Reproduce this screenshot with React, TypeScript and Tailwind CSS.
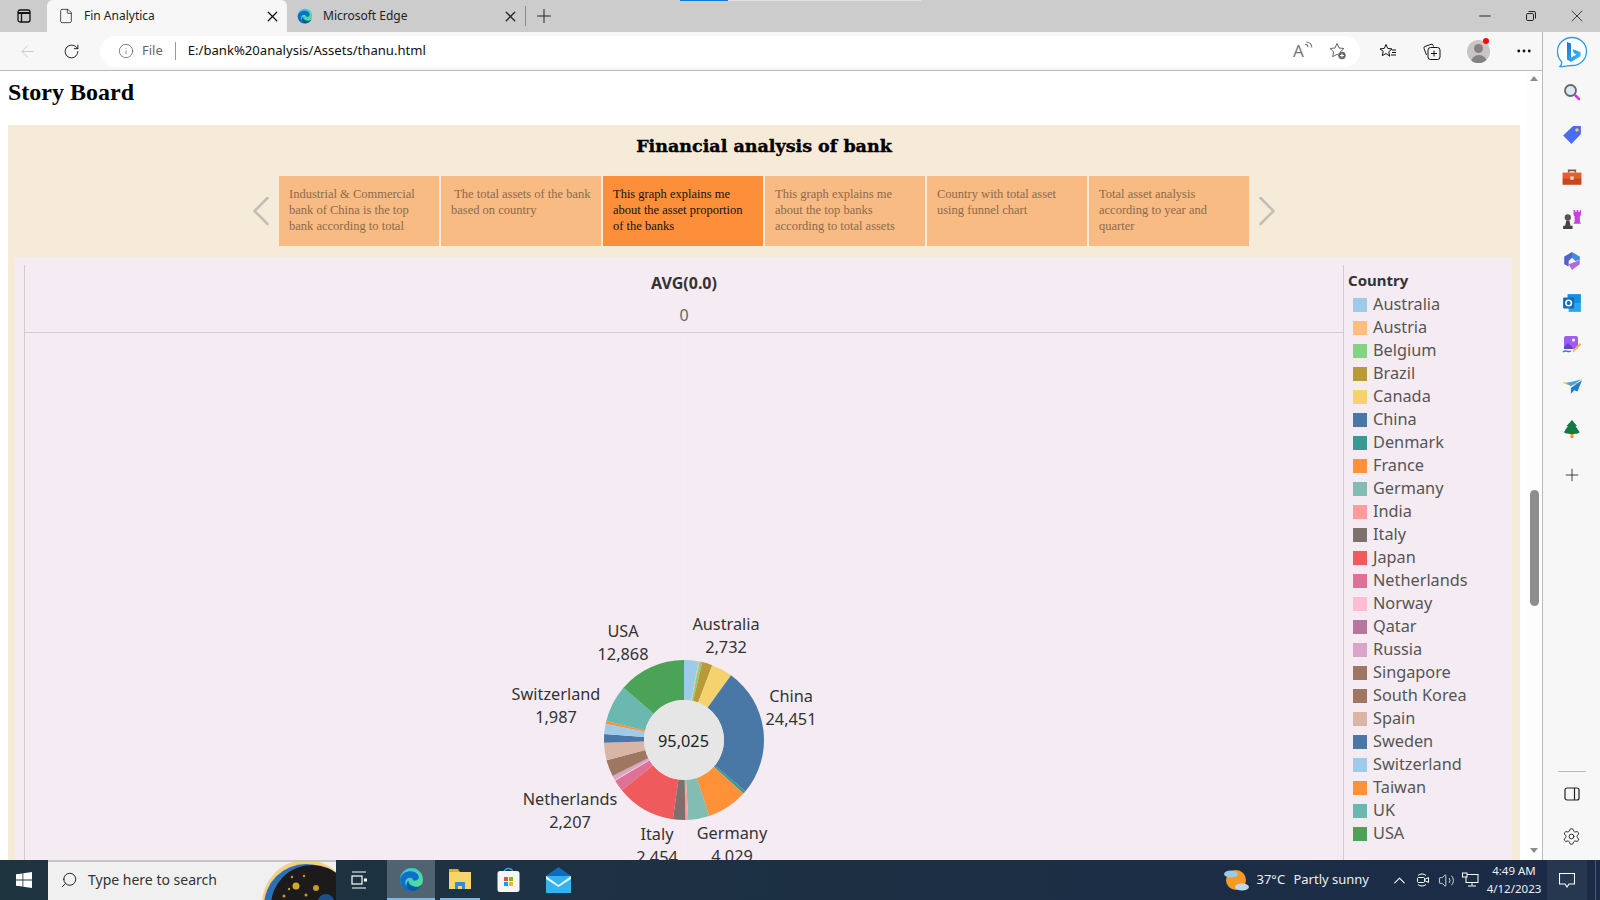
import React from 'react';
import { ArrowLeft, ChevronLeft, ChevronRight, ChevronUp, File, Info, MoreHorizontal, Plus, RotateCw, Search, Settings, X, Minus, Volume2 } from 'lucide-react';

const cards = [
  { text: 'Industrial & Commercial bank of China is the top bank according to total' },
  { text: '\u00a0The total assets of the bank based on country' },
  { text: 'This graph explains me about the asset proportion of the banks', active: true },
  { text: 'This graph explains me about the top banks according to total assets' },
  { text: 'Country with total asset using funnel chart' },
  { text: 'Total asset analysis according to year and quarter' },
];

const countries = [
  { name: 'Australia', color: '#9dcbe9', from: 0, to: 10.4 },
  { name: 'Austria', color: '#ffbe7d', from: 10.4, to: 11.2 },
  { name: 'Belgium', color: '#86d285', from: 11.2, to: 13.2 },
  { name: 'Brazil', color: '#b89a39', from: 13.2, to: 20.7 },
  { name: 'Canada', color: '#f5d26e', from: 20.7, to: 36 },
  { name: 'China', color: '#4a78a6', from: 36, to: 129.8 },
  { name: 'Denmark', color: '#399993', from: 129.8, to: 132 },
  { name: 'France', color: '#ff9139', from: 132, to: 161.6 },
  { name: 'Germany', color: '#82bdb4', from: 161.6, to: 177 },
  { name: 'India', color: '#ff9d9d', from: 177, to: 179 },
  { name: 'Italy', color: '#7d716e', from: 179, to: 188 },
  { name: 'Japan', color: '#ef5a5c', from: 188, to: 231 },
  { name: 'Netherlands', color: '#de7196', from: 231, to: 239.4 },
  { name: 'Norway', color: '#ffbdd3', from: 239.4, to: 240.4 },
  { name: 'Qatar', color: '#b6769f', from: 240.4, to: 240.8 },
  { name: 'Russia', color: '#d9a5c8', from: 240.8, to: 243 },
  { name: 'Singapore', color: '#9f7661', from: 243, to: 243.4 },
  { name: 'South Korea', color: '#9f7661', from: 243.4, to: 255.4 },
  { name: 'Spain', color: '#d9b5a6', from: 255.4, to: 268 },
  { name: 'Sweden', color: '#4a78a6', from: 268, to: 274.3 },
  { name: 'Switzerland', color: '#9dcbe9', from: 274.3, to: 281.8 },
  { name: 'Taiwan', color: '#ff9139', from: 281.8, to: 283.8 },
  { name: 'UK', color: '#6bb8b0', from: 283.8, to: 310.8 },
  { name: 'USA', color: '#4aa356', from: 310.8, to: 360 },
];

// label centres, measured from the top left of the chart pane
const labels = [
  { name: 'USA', value: '12,868', x: 598, y: 298 },
  { name: 'Australia', value: '2,732', x: 701, y: 291 },
  { name: 'China', value: '24,451', x: 766, y: 363 },
  { name: 'Switzerland', value: '1,987', x: 531, y: 361 },
  { name: 'Netherlands', value: '2,207', x: 545, y: 466 },
  { name: 'Italy', value: '2,454', x: 632, y: 501 },
  { name: 'Germany', value: '4,029', x: 707, y: 500 },
];

function slicePath(from: number, to: number) {
  const point = (deg: number, r: number) => {
    const a = (deg * Math.PI) / 180;
    return `${(80 + r * Math.sin(a)).toFixed(2)} ${(80 - r * Math.cos(a)).toFixed(2)}`;
  };
  const large = to - from > 180 ? 1 : 0;
  return `M${point(from, 40)} L${point(from, 80)} A80 80 0 ${large} 1 ${point(to, 80)} L${point(to, 40)} A40 40 0 ${large} 0 ${point(from, 40)}Z`;
}

function EdgeLogo({ size }: { size: number }) {
  return (
    <svg width={size} height={size} viewBox="0 0 24 24">
      <defs>
        <linearGradient id="edgeTop" x1="0" y1="0" x2="1" y2="1">
          <stop offset="0" stopColor="#35c1f1" />
          <stop offset="1" stopColor="#5be37d" />
        </linearGradient>
      </defs>
      <circle cx="12" cy="12" r="11" fill="url(#edgeTop)" />
      <path d="M1 12C2 6 7 4 11 4c5 0 8 3 8 6 0 2-2 3-4 3-2 0-2-1-2-2-3-2-7 0-7 4 0 4 5 8 11 6-2 2-5 3-8 2-5-1-8-6-8-11z" fill="#0f6fc6" />
      <path d="M9 13c0 4 4 6 8 6 2 0 4-1 5-3-1 4-5 7-9 7-3 0-5-2-6-5 0-2 1-4 2-5z" fill="#0c59a4" />
    </svg>
  );
}

function BingButton() {
  return (
    <svg width="32" height="32" viewBox="0 0 32 32">
      <defs>
        <linearGradient id="bingFill" x1="0" y1="0" x2="1" y2="1">
          <stop offset="0" stopColor="#1b6fe0" />
          <stop offset="1" stopColor="#37c6f0" />
        </linearGradient>
      </defs>
      <path d="M16 1.500c8 0 14.500 6.200 14.500 14S24 29.500 16 29.500c-3 0-8 1.500-12 1 1.500-1.500 2-3.500 1.500-5C3 23 1.500 19.500 1.500 15.500 1.500 7.700 8 1.500 16 1.500z" fill="#fff" stroke="#2f9be8" strokeWidth="1.300" />
      <path d="M11 6l4 1.500v14l5.500-3-2.500-1.200-1.500-4 8 2.700v4.300L15 26l-4-2.500z" fill="url(#bingFill)" />
    </svg>
  );
}

function SidebarIcon({ children }: { children: React.ReactNode }) {
  return <div className="flex h-[42px] w-full items-center justify-center">{children}</div>;
}

function Sidebar() {
  return (
    <aside className="flex w-[57px] shrink-0 flex-col items-center bg-[#f7f7f7]">
      <div className="flex h-[39px] w-full items-center justify-center pl-px">
        <BingButton />
      </div>
      <SidebarIcon>
        <svg width="18" height="18" viewBox="0 0 18 18" fill="none">
          <circle cx="7.500" cy="7.500" r="5.500" fill="#dbe9f2" stroke="#666" strokeWidth="1.800" />
          <path d="M11.800 11.800L16 16" stroke="#c93fd8" strokeWidth="2.600" strokeLinecap="round" />
        </svg>
      </SidebarIcon>
      <div className="mt-px flex w-full flex-col">
        <SidebarIcon>
          <svg width="20" height="20" viewBox="0 0 18 18">
            <path d="M10 1h7v7l-8.500 9L1 9.500z" fill="#4a6cf0" />
            <circle cx="13.500" cy="4.500" r="1.600" fill="#f7c948" />
          </svg>
        </SidebarIcon>
        <SidebarIcon>
          <svg width="20" height="20" viewBox="0 0 18 18" fill="none">
            <path d="M6 5V3h6v2" stroke="#7a5b50" strokeWidth="1.500" />
            <rect x="0.500" y="5" width="17" height="5" fill="#e85d2c" />
            <rect x="0.500" y="10" width="17" height="6" fill="#c9471c" />
            <rect x="7.500" y="8.500" width="3" height="3" fill="#ddd" />
          </svg>
        </SidebarIcon>
        <SidebarIcon>
          <svg width="21" height="21" viewBox="0 0 20 20">
            <path d="M12 1h1.500v1.500H15V1h1.500v1.500H18V1h1v5l-1 1v5l1 2h-7l1-2V7l-1-1z" fill="#c93fe0" />
            <circle cx="6.500" cy="8" r="3" fill="#555" />
            <path d="M5 11h3l1 5H4zM2 16h9v3H2z" fill="#444" />
          </svg>
        </SidebarIcon>
        <SidebarIcon>
          <svg width="20" height="20" viewBox="0 0 18 18" fill="none">
            <path d="M9 1l7 4v3l-4 1-3-3z" fill="#3b8fd9" />
            <path d="M2 5l7-4v5L6 9v5l-4-2z" fill="#5560c9" />
            <path d="M6 12l10-4v4l-7 5z" fill="#b06ce0" />
          </svg>
        </SidebarIcon>
        <SidebarIcon>
          <svg width="20" height="20" viewBox="0 0 18 18">
            <rect x="5" y="1" width="12" height="8" fill="#1490df" />
            <path d="M6 9h11v8H6z" fill="#28a8ea" />
            <rect x="1" y="4" width="10" height="10" rx="1" fill="#0f6cbd" />
            <circle cx="6" cy="9" r="2.500" fill="none" stroke="#fff" strokeWidth="1.400" />
          </svg>
        </SidebarIcon>
        <SidebarIcon>
          <svg width="20" height="20" viewBox="0 0 20 20">
            <rect x="2" y="1" width="14" height="13" rx="2" fill="#9d5df0" />
            <circle cx="11.500" cy="5" r="1.500" fill="#fff" />
            <path d="M2 12l4-4 5 5-1 1H2z" fill="#6d3fd0" />
            <path d="M1 17c3-3 5 1 8-1" stroke="#1ca36f" strokeWidth="1.500" fill="none" />
            <path d="M11 15l7-7 1.500 1.500-7 7-2 .5z" fill="#f4b942" />
          </svg>
        </SidebarIcon>
        <SidebarIcon>
          <svg width="20" height="16" viewBox="0 0 18 14">
            <path d="M0 3h18L8 6z" fill="#f5b52e" />
            <path d="M18 0L8 6l-4-2.500z" fill="#35a7f2" />
            <path d="M18 1L8 8v5l3-3 3 1z" fill="#1b7fd6" />
          </svg>
        </SidebarIcon>
        <SidebarIcon>
          <svg width="18" height="20" viewBox="0 0 18 20">
            <rect x="7.500" y="14" width="3" height="5" fill="#e49b1f" />
            <path d="M9 1l5 6h-1.500l4 6c0 1-2 2-7.500 2S1 14 1 13l4-6H3.500z" fill="#107c41" />
          </svg>
        </SidebarIcon>
      </div>
      <div className="mt-[4px] flex h-[42px] w-full items-center justify-center">
        <Plus className="h-[20px] w-[20px] text-[#333]" strokeWidth={1.100} />
      </div>
      <div className="mt-auto flex w-full flex-col items-center pb-[4px]">
        <div className="h-px w-[28px] bg-[#bbb]" />
        <div className="flex h-[44px] items-center">
          <svg width="16" height="14" viewBox="0 0 16 14" fill="none" stroke="#222" strokeWidth="1.200">
            <rect x="1" y="1" width="14" height="12" rx="2" />
            <path d="M10.500 1v12" />
          </svg>
        </div>
        <div className="flex h-[40px] items-center">
          <Settings className="h-[19px] w-[19px] text-[#222]" strokeWidth={1.200} />
        </div>
      </div>
    </aside>
  );
}

function TabStrip() {
  return (
    <div className="relative flex h-[32px] shrink-0 items-end bg-[#cccccc] text-[12px] text-[#222]">
      <div className="absolute left-[680px] top-0 flex h-px">
        <div className="w-[48px] bg-[#0a78d4]" />
        <div className="w-[193px] bg-[#e2e2e2]" />
      </div>
      <div className="flex h-[32px] w-[47px] items-center justify-center">
        <svg width="14" height="14" viewBox="0 0 14 14" fill="none" stroke="#111" strokeWidth="1.300">
          <rect x="1" y="1" width="12" height="12" rx="2" />
          <path d="M1 4h12" strokeWidth="2" />
          <path d="M4.500 4v9" />
        </svg>
      </div>
      <div className="flex h-[32px] w-[240px] items-center rounded-t-[6px] bg-[#f7f7f7] pl-[11px] pr-[6px]">
        <File className="h-[16px] w-[16px] text-[#222]" strokeWidth={1.200} />
        <span className="ml-[10px] flex-1">Fin Analytica</span>
        <X className="h-[17px] w-[17px] text-[#111]" strokeWidth={1.800} />
      </div>
      <div className="flex h-[32px] w-[238px] items-center pl-[10px] pr-[6px]">
        <EdgeLogo size={16} />
        <span className="ml-[10px] flex-1">Microsoft Edge</span>
        <X className="h-[17px] w-[17px] text-[#222]" strokeWidth={1.800} />
      </div>
      <div className="mb-[6px] h-[20px] w-px bg-[#888]" />
      <div className="flex h-[32px] w-[36px] items-center justify-center">
        <Plus className="h-[22px] w-[22px] text-[#222]" strokeWidth={1.100} />
      </div>
      <div className="ml-auto flex h-[32px] items-center text-[#222]">
        <div className="flex w-[46px] justify-center">
          <Minus className="h-[18px] w-[18px]" strokeWidth={1.300} />
        </div>
        <div className="flex w-[46px] justify-center">
          <svg width="10" height="10" viewBox="0 0 10 10" fill="none" stroke="#222" strokeWidth="1">
            <rect x="0.500" y="2.500" width="7" height="7" rx="1.300" />
            <path d="M2.500 .5h5.500a1.500 1.500 0 0 1 1.500 1.500v5.500" />
          </svg>
        </div>
        <div className="flex w-[46px] justify-center">
          <X className="h-[20px] w-[20px]" strokeWidth={1} />
        </div>
      </div>
    </div>
  );
}

function Toolbar() {
  return (
    <div className="flex h-[39px] shrink-0 items-center border-b border-[#b9b9b9] bg-[#f7f7f7]">
      <div className="flex w-[55px] justify-center">
        <ArrowLeft className="h-[19px] w-[19px] text-[#c4c4c4]" strokeWidth={1.100} />
      </div>
      <div className="flex w-[33px] justify-center">
        <RotateCw className="h-[17px] w-[17px] text-[#222]" strokeWidth={1.400} />
      </div>
      <div className="ml-[12px] flex h-[31px] w-[1260px] items-center rounded-full bg-white pl-[18px] pr-[13px] text-[12px]">
        <Info className="h-[16px] w-[16px] text-[#666]" strokeWidth={1.200} />
        <span className="ml-[8px] text-[13px] text-[#666]">File</span>
        <div className="ml-[12px] h-[18px] w-px bg-[#999]" />
        <span className="ml-[12px] text-[13.100px] text-[#111]">E:/bank%20analysis/Assets/thanu.html</span>
        <div className="ml-auto flex items-center gap-[16px] text-[#555]">
          <span className="relative h-[20px] w-[20px] text-[17px] leading-[20px] text-[#777]">
            A
            <svg className="absolute left-[11px] top-0" width="9" height="9" viewBox="0 0 8 8" fill="none" stroke="#777" strokeWidth="0.900">
              <path d="M1 3c1.500 0 2.500 1 2.500 2.500M2 .8c2.500 0 5 2 5 5" />
            </svg>
          </span>
          <svg width="18" height="18" viewBox="0 0 18 18" fill="none">
            <path d="M8 1.500l2 4.500 5 .5-3.700 3.300 1 4.900L8 12.300 3.700 14.700l1-4.900L1 6.500 6 6z" stroke="#666" strokeWidth="1" />
            <circle cx="13" cy="13.500" r="3.700" fill="#666" />
            <path d="M11 13.500h4M13 11.500v4" stroke="#fff" strokeWidth="1" />
          </svg>
        </div>
      </div>
      <div className="ml-[18px] flex w-[20px] justify-center">
        <svg width="18" height="16" viewBox="0 0 18 16" fill="none" stroke="#111" strokeWidth="1">
          <path d="M7 1.500l1.800 4 4.200.4-3.200 2.900.9 4.400L7 10.500l-3.700 2.200.9-4.400L1 5.900l4.200-.4z" />
          <path d="M13 7h4M13 9.500h4M12 12h5" />
        </svg>
      </div>
      <div className="ml-[24px] flex w-[20px] justify-center">
        <svg width="18" height="17" viewBox="0 0 18 17" fill="none" stroke="#111" strokeWidth="1">
          <path d="M3.500 12L1 5.500a1.500 1.500 0 0 1 1-2L8 1.300A1.500 1.500 0 0 1 10 2.200l.5 1.300" />
          <rect x="5" y="4.500" width="12" height="12" rx="2.500" />
          <path d="M11 7.500v6M8 10.500h6" />
        </svg>
      </div>
      <div className="relative ml-[25px] flex h-[23px] w-[23px] items-end justify-center overflow-hidden rounded-full bg-[#c8c6c4]">
        <div className="absolute left-[7px] top-[4px] h-[9px] w-[9px] rounded-full bg-[#838383]" />
        <div className="h-[8px] w-[16px] rounded-t-full bg-[#838383]" />
      </div>
      <div className="relative">
        <div className="absolute left-[-7px] top-[-13px] h-[6px] w-[6px] rounded-full bg-[#f20d0d]" />
      </div>
      <div className="ml-[24px] flex w-[20px] justify-center">
        <MoreHorizontal className="h-[18px] w-[18px] text-[#111]" strokeWidth={1.800} />
      </div>
    </div>
  );
}

function Scrollbar() {
  return (
    <div className="flex w-[16px] shrink-0 flex-col items-center bg-[#fdfdfd]">
      <div className="mt-[5px] h-0 w-0 border-x-[4px] border-b-[5px] border-x-transparent border-b-[#8c8c8c]" />
      <div className="mt-[409px] h-[116px] w-[9px] rounded-full bg-[#8d8d8d]" />
      <div className="mt-[242px] h-0 w-0 border-x-[4px] border-t-[5px] border-x-transparent border-t-[#8c8c8c]" />
    </div>
  );
}

function Carousel() {
  return (
    <div className="mt-[19px] flex justify-center">
      <div className="flex w-[36px] items-center justify-center">
        <ChevronLeft className="h-[52px] w-[52px] shrink-0 text-[#c3beb5]" strokeWidth={1.150} />
      </div>
      <div className="flex gap-[2px]">
        {cards.map((card) => (
          <div
            key={card.text}
            className={
              card.active
                ? 'h-[70px] w-[160px] bg-[#fd8f3a] px-[10px] pt-[10px] font-["Liberation_Serif",serif] text-[12.500px] leading-[16px] text-[#1c1008]'
                : 'h-[70px] w-[160px] bg-[#f8bb83] px-[10px] pt-[10px] font-["Liberation_Serif",serif] text-[12.500px] leading-[16px] text-[#8c6a4c]'
            }
          >
            {card.text}
          </div>
        ))}
      </div>
      <div className="flex w-[36px] items-center justify-center">
        <ChevronRight className="h-[52px] w-[52px] shrink-0 text-[#c3beb5]" strokeWidth={1.150} />
      </div>
    </div>
  );
}

function Donut() {
  return (
    <div className="relative min-h-0 flex-1">
      <div className="absolute bottom-0 left-[658px] top-0 w-px bg-[#f7eff6]" />
      <svg className="absolute left-[579px] top-[327px]" width="160" height="160" viewBox="0 0 160 160">
        {countries.map((c) => (
          <path key={c.name} d={slicePath(c.from, c.to)} fill={c.color} />
        ))}
        <circle cx="80" cy="80" r="40" fill="#e6e6e6" />
      </svg>
      <div className="absolute left-[658.500px] top-[408px] -translate-x-1/2 -translate-y-1/2 text-[16.300px] text-[#222]">95,025</div>
      {labels.map((l) => (
        <div
          key={l.name}
          className="absolute -translate-x-1/2 whitespace-nowrap text-center text-[16.300px] leading-[23px] text-[#333]"
          style={{ left: l.x, top: l.y - 11 }}
        >
          <div>{l.name}</div>
          <div>{l.value}</div>
        </div>
      ))}
    </div>
  );
}

function Legend() {
  return (
    <div className="w-[169px] shrink-0 border-l border-[#cfcbd1] pl-[4px] text-[#555]">
      <div className="h-[28px] pt-[5px] text-[15px] font-bold leading-[20px] text-[#333]">Country</div>
      {countries.map((c) => (
        <div key={c.name} className="flex h-[23px] items-center pl-[5px] text-[16.300px]">
          <span className="h-[14px] w-[14px] shrink-0" style={{ backgroundColor: c.color }} />
          <span className="ml-[6px] whitespace-nowrap">{c.name}</span>
        </div>
      ))}
      <div className="mt-[13px] text-[15px] font-bold leading-[20px] text-[#333]">Total Assets In B</div>
    </div>
  );
}

function StoryBoard() {
  return (
    <main className="min-w-0 flex-1 overflow-hidden bg-white">
      <h2 className='h-[54px] pl-[8px] pt-[6px] font-["Liberation_Serif",serif] text-[24px] font-bold leading-[30px] text-black'>Story Board</h2>
      <section className="ml-[8px] h-[800px] w-[1512px] bg-[#f6ead8]">
        <h3 className='pt-[10px] text-center font-["DejaVu_Serif",serif] text-[17.500px] font-bold leading-[22px] text-black [-webkit-text-stroke:0.4px_black]'>Financial analysis of bank</h3>
        <Carousel />
        <div className='ml-[7px] mt-[11px] flex h-[700px] w-[1497px] bg-[#f5ebf2] pt-[8px] font-["Noto_Sans",sans-serif]'>
          <div className="ml-[9px] flex w-[1319px] shrink-0 flex-col border-l border-[#cfcbd1]">
            <div className="h-[68px] shrink-0 border-b border-[#cfcbd1] pt-[6px] text-center">
              <div className="text-[16px] font-bold leading-[24px] text-[#333]">AVG(0.0)</div>
              <div className="mt-[8px] text-[16px] leading-[24px] text-[#666]">0</div>
            </div>
            <Donut />
          </div>
          <Legend />
        </div>
      </section>
    </main>
  );
}

function Taskbar() {
  return (
    <footer className='flex h-[40px] shrink-0 items-center bg-gradient-to-r from-[#1e3540] to-[#1b2b47] font-["Noto_Sans",sans-serif] text-white'>
      <div className="flex h-[40px] w-[48px] items-center justify-center">
        <svg width="16" height="16" viewBox="0 0 16 16" fill="#fff">
          <path d="M0 2.300l6.500-.9v6.200H0zM7.300 1.300L16 0v7.600H7.300zM0 8.400h6.500v6.200L0 13.700zM7.300 8.400H16V16l-8.700-1.200z" />
        </svg>
      </div>
      <div className="relative flex h-[40px] w-[288px] items-center overflow-hidden border-t-2 border-[#c4c4c4] bg-[#f0f0f0] pb-[3px] pl-[12px] text-[14px] text-[#333]">
        <Search className="h-[18px] w-[18px] -scale-x-100 text-[#222]" strokeWidth={1.300} />
        <span className="ml-[10px]">Type here to search</span>
        <svg className="absolute right-0 top-0" width="76" height="40" viewBox="0 0 76 40">
          <circle cx="46" cy="42" r="44" fill="#f5cf85" />
          <circle cx="46" cy="44" r="42" fill="#2b6fb5" />
          <circle cx="52" cy="44" r="41" fill="#1c1a1a" />
          <circle cx="36" cy="24" r="3.500" fill="#d4a82c" />
          <circle cx="56" cy="26" r="3" fill="#c8982a" />
          <circle cx="24" cy="34" r="1.500" fill="#c8982a" />
          <circle cx="29" cy="27" r="1.200" fill="#c8982a" />
          <circle cx="44" cy="14" r="1.200" fill="#c8982a" />
          <circle cx="32" cy="15" r="1.200" fill="#c8982a" />
          <circle cx="46" cy="33" r="1.500" fill="#c8982a" />
          <circle cx="66" cy="40" r="8" fill="#1d4f8a" />
        </svg>
      </div>
      <div className="flex h-[40px] w-[46px] items-center justify-center">
        <svg width="16" height="18" viewBox="0 0 16 18" fill="none" stroke="#fff" strokeWidth="1.200">
          <path d="M1 1h14M1 17h14" />
          <rect x="1" y="5" width="10" height="8" />
          <rect x="13" y="7.500" width="3" height="3" fill="#fff" stroke="none" />
        </svg>
      </div>
      <div className="ml-[5px] flex h-[40px] w-[48px] items-center justify-center border-b-2 border-[#76b9ed] bg-[#4f6470]">
        <EdgeLogo size={25} />
      </div>
      <div className="ml-[5px] flex h-[40px] w-[40px] items-center justify-center border-b-2 border-[#76b9ed]">
        <svg width="24" height="22" viewBox="0 0 24 22">
          <path d="M1 1h9l2 3H1z" fill="#e5a82a" />
          <rect x="1" y="4" width="22" height="17" fill="#f8d568" />
          <path d="M7 21v-7h10v7h-3v-3h-4v3z" fill="#2f8ed8" />
        </svg>
      </div>
      <div className="ml-[8px] flex h-[40px] w-[40px] items-center justify-center">
        <svg width="23" height="26" viewBox="0 0 23 26">
          <path d="M7 6c0-6 9-6 9 0" fill="none" stroke="#35a7f2" strokeWidth="1.500" />
          <rect x="0.500" y="4" width="22" height="21" rx="2.500" fill="#f5f5f5" />
          <rect x="7" y="10" width="4" height="4" fill="#f25022" />
          <rect x="12" y="10" width="4" height="4" fill="#7fba00" />
          <rect x="7" y="15" width="4" height="4" fill="#00a4ef" />
          <rect x="12" y="15" width="4" height="4" fill="#ffb900" />
        </svg>
      </div>
      <div className="ml-[10px] flex h-[40px] w-[40px] items-center justify-center">
        <svg width="25" height="26" viewBox="0 0 25 26">
          <path d="M12.500 0L25 9H0z" fill="#0f6cbd" />
          <rect y="9" width="25" height="17" fill="#35b3f0" />
          <path d="M0 9l12.500 9L25 9v3l-12.500 8L0 12z" fill="#e8f6fd" />
        </svg>
      </div>
      <div className="ml-auto flex h-[40px] items-center text-[13px] text-[#eee]">
        <svg width="26" height="26" viewBox="0 0 26 26">
          <circle cx="13" cy="13" r="10" fill="#f59a23" />
          <ellipse cx="8" cy="7" rx="7" ry="3.500" fill="#9cc9ea" />
          <ellipse cx="19" cy="20" rx="7" ry="3.500" fill="#bcd9ee" />
        </svg>
        <span className="ml-[7px] w-[37px] whitespace-nowrap">37°C</span>
        <span className="whitespace-nowrap">Partly sunny</span>
        <ChevronUp className="ml-[21px] h-[19px] w-[19px] text-white" strokeWidth={1.300} />
        <svg className="ml-[6px]" width="16" height="16" viewBox="0 0 16 16" fill="none" stroke="#fff" strokeWidth="1">
          <path d="M3 3.500a6 6 0 0 1 8 0M3 12.500a6 6 0 0 0 8 0" />
          <rect x="2.500" y="5.500" width="7" height="5" rx="1" />
          <path d="M9.500 7.500l4-2v5l-4-2" />
        </svg>
        <Volume2 className="ml-[7px] h-[17px] w-[17px] text-white" strokeWidth={1.100} />
        <svg className="ml-[7px]" width="17" height="16" viewBox="0 0 17 16" fill="none" stroke="#fff" strokeWidth="1">
          <rect x="4" y="2.500" width="12" height="8" />
          <rect x="0.500" y="1" width="4.500" height="4" fill="#1b2b47" />
          <path d="M10 10.500v3M6 14h8" />
        </svg>
        <div className="ml-[6px] w-[58px] text-center text-[11.500px] leading-[18px] text-[#eee]">
          <div>4:49 AM</div>
          <div>4/12/2023</div>
        </div>
        <div className="ml-[4px] flex h-[40px] w-[40px] items-center justify-center bg-[#263850]">
          <svg width="16" height="15" viewBox="0 0 16 15" fill="none" stroke="#fff" strokeWidth="1.100">
            <path d="M.5.500h15v10.500H10l-2 3-2-3H.5z" />
          </svg>
        </div>
        <div className="flex h-[40px] w-[13px] justify-end pr-[4px]">
          <div className="h-full w-px bg-[#4a5b70]" />
        </div>
      </div>
    </footer>
  );
}

export default function App() {
  return (
    <div className='flex h-[900px] w-[1600px] flex-col overflow-hidden bg-[#f7f7f7] font-["Noto_Sans",sans-serif]'>
      <TabStrip />
      <div className="flex min-h-0 flex-1">
        <div className="flex min-w-0 flex-1 flex-col border-r border-[#b9b9b9]">
          <Toolbar />
          <div className="flex min-h-0 flex-1">
            <StoryBoard />
            <Scrollbar />
          </div>
        </div>
        <Sidebar />
      </div>
      <Taskbar />
    </div>
  );
}
